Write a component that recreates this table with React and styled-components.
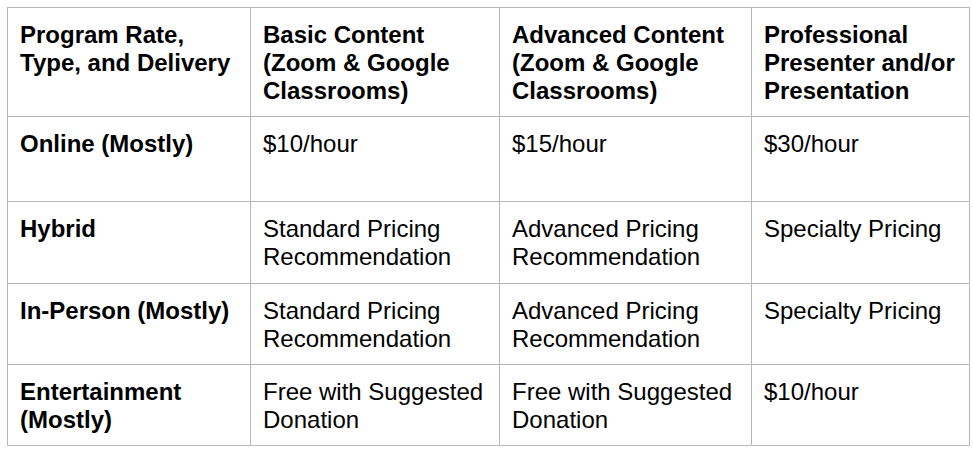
import { createGlobalStyle, styled } from "styled-components"

const GlobalStyle = createGlobalStyle`
  body {
    margin: 0;
    background: #ffffff;
    font-family: "Liberation Sans", Arial, sans-serif;
    color: #000000;
  }
`

const columns = [
  { id: "type", width: 243 },
  { id: "basic", width: 249 },
  { id: "advanced", width: 252 },
  { id: "pro", width: 218 },
]

const header = [
  "Program Rate, Type, and Delivery",
  "Basic Content (Zoom & Google Classrooms)",
  "Advanced Content (Zoom & Google Classrooms)",
  "Professional Presenter and/or Presentation",
]

const rows = [
  { id: 1, height: 85, cells: ["Online (Mostly)", "$10/hour", "$15/hour", "$30/hour"] },
  {
    id: 2,
    height: 82,
    cells: ["Hybrid", "Standard Pricing Recommendation", "Advanced Pricing Recommendation", "Specialty Pricing"],
  },
  {
    id: 3,
    height: 81,
    cells: ["In-Person (Mostly)", "Standard Pricing Recommendation", "Advanced Pricing Recommendation", "Specialty Pricing"],
  },
  {
    id: 4,
    height: 81,
    cells: ["Entertainment (Mostly)", "Free with Suggested Donation", "Free with Suggested Donation", "$10/hour"],
  },
]

const App = () => {
  return (
    <>
      <GlobalStyle />
      <Page>
        <Table>
          <colgroup>
            {columns.map(col => <col key={col.id} style={{ width: col.width }} />)}
          </colgroup>
          <thead>
            <Row $height={109}>
              {header.map(text => <HeadCell key={text}>{text}</HeadCell>)}
            </Row>
          </thead>
          <tbody>
            {rows.map(row => (
              <Row key={row.id} $height={row.height}>
                {row.cells.map((text, i) => (
                  <Cell key={i} $bold={i === 0}>{text}</Cell>
                ))}
              </Row>
            ))}
          </tbody>
        </Table>
      </Page>
    </>
  )
}

const Page = styled.div`
  padding: 7px 0 0 7px;
`

const Table = styled.table`
  width: 962px;
  table-layout: fixed;
  border-collapse: collapse;
  border: 1px solid #b7b7b7;
`

const Row = styled.tr`
  height: ${props => props.$height}px;
`

const HeadCell = styled.th`
  border: 1px solid #b7b7b7;
  padding: 13px 8px 6px 12px;
  text-align: left;
  vertical-align: top;
  font-size: 24px;
  line-height: 28px;
  font-weight: 700;
`

const Cell = styled.td`
  border: 1px solid #b7b7b7;
  padding: 13px 8px 6px 12px;
  vertical-align: top;
  font-size: 24px;
  line-height: 28px;
  font-weight: ${props => (props.$bold ? 700 : 400)};
`

export default App
